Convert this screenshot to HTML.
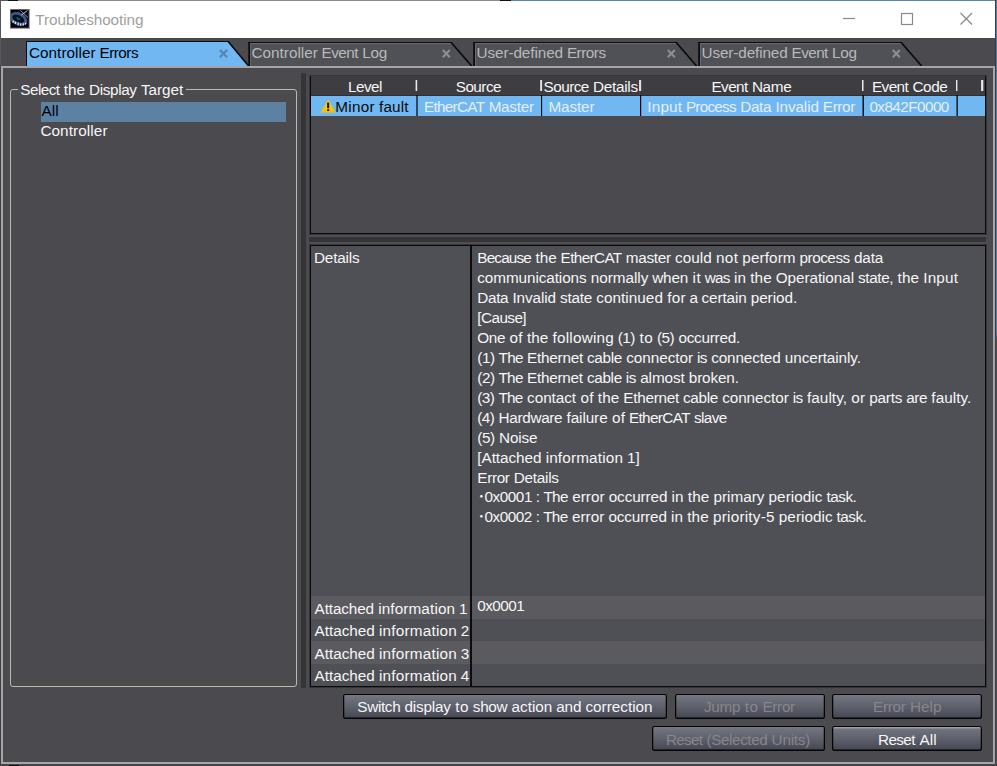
<!DOCTYPE html>
<html><head><meta charset="utf-8"><title>Troubleshooting</title>
<style>
html,body{margin:0;padding:0;}
body{width:997px;height:766px;position:relative;overflow:hidden;background:#4a4a4f;font-family:"Liberation Sans","Noto Sans CJK JP",sans-serif;font-size:15.3px;color:#fff;}
.abs{position:absolute;}
.t{position:absolute;white-space:nowrap;line-height:20px;height:20px;}
.t span{position:absolute;top:0;white-space:pre;}
#title{left:1px;top:1px;width:994px;height:37px;background:#fff;}
#wintop{left:0;top:0;width:997px;height:1px;background:linear-gradient(90deg,#555 0,#555 8px,#111 8px,#111 18px,#8c8c8c 18px,#8c8c8c 500px,#111 500px,#111 511px,#5c84b0 511px);}
#winleft{left:0;top:0;width:1px;height:766px;background:linear-gradient(#585858 0,#585858 64px,#3e3e42 68px);}
#winright{left:995px;top:0;width:1px;height:766px;background:#3c3d42;}
#winright2{left:996px;top:0;width:1px;height:766px;background:linear-gradient(#567ca6 0,#567ca6 330px,#4c4c51 340px);}
#winbot{left:0;top:764px;width:997px;height:2px;background:#444448;}
#panel{left:1px;top:66px;width:990px;height:694px;border:2px solid #a6a6a6;}
.btn{position:absolute;height:23px;border:1px solid #050505;border-radius:2px;background:linear-gradient(#747681,#5e606b 50%,#454852);box-shadow:inset 0 -1px 0 rgba(0,0,0,0.5),inset 1px 0 0 rgba(0,0,0,0.25),inset -1px 0 0 rgba(0,0,0,0.25);}
.btn.hl{box-shadow:inset 0 -1px 0 rgba(0,0,0,0.5),inset 1px 0 0 rgba(0,0,0,0.25),inset -1px 0 0 rgba(0,0,0,0.25),inset 0 1.5px 0 rgba(255,255,255,0.3);}
#gb{left:10px;top:89px;width:285px;height:596px;border:1px solid #b9b9ac;border-radius:3px;}
#gbgap{left:18px;top:88px;width:168px;height:3px;background:#4a4a4f;}
#selAll{left:41px;top:102px;width:245px;height:20px;background:#5d81a3;}
#vsplit{left:301px;top:73px;width:5px;height:615px;background:#353538;}
#hsplit{left:309px;top:237px;width:677px;height:5px;background:#353538;border-top:2px solid #4e4e53;border-bottom:2px solid #4e4e53;margin-top:-2px;}
#tbl{left:310px;top:76px;width:674px;height:156px;border:1px solid #0a0a0a;box-shadow:0 0 0 1px #363639;background:#4a4a4f;}
#thead{left:311px;top:76px;width:674px;height:20px;background:#3d3d42;border-bottom:1px solid #303034;box-sizing:border-box;}
#trow{left:311px;top:96px;width:674px;height:20px;background:#71b8f2;}
.hsep{position:absolute;top:80px;height:11px;}
.rsep{position:absolute;top:95px;height:21px;}
#det{left:310px;top:245px;width:674px;height:440px;border:1px solid #0a0a0a;box-shadow:0 0 0 1px #363639;background:#4f5055;}
#detdiv{left:470px;top:246px;width:2px;height:440px;background:#0c0c0c;}
.ai{position:absolute;left:311px;width:674px;}
</style></head><body>
<div class="abs" id="title"></div>
<div class="abs" id="wintop"></div>
<div class="abs" id="winleft"></div>
<div class="abs" id="winright"></div><div class="abs" id="winright2"></div>
<div class="abs" id="winbot"></div>
<svg class="abs" style="left:0;top:0" width="997" height="70" viewBox="0 0 997 70">
 <!-- window buttons -->
 <g stroke="#8a8a8a" stroke-width="1.2" fill="none">
  <line x1="843" y1="18.5" x2="855" y2="18.5"/>
  <rect x="901.5" y="13.5" width="11" height="11"/>
  <line x1="960.5" y1="13" x2="972" y2="24.5"/><line x1="972" y1="13" x2="960.5" y2="24.5"/>
 </g>
 <!-- tabs -->
 <path d="M26.5 66 V41.5 H228.3 L248.9 66 Z" fill="#71b8f2"/><path d="M26.5 66 V41.5 H228.3" fill="none" stroke="#0a0a0a" stroke-width="1"/><path d="M228.0 41.3 L248.6 66" fill="none" stroke="#0a0a0a" stroke-width="1.7"/>
 <path d="M249.5 66 V42.5 H451.3 L471.9 66 Z" fill="#505156"/><path d="M250.5 66 V44 M250.0 43.5 H451.9" fill="none" stroke="#6a6a6f" stroke-width="1"/><path d="M249.2 66 V42.0" fill="none" stroke="#0a0a0a" stroke-width="1.7"/><path d="M248.3 42.5 H451.3" fill="none" stroke="#0a0a0a" stroke-width="1"/><path d="M451.0 42.3 L471.6 66" fill="none" stroke="#0a0a0a" stroke-width="1.7"/>
 <path d="M474.5 66 V42.5 H676.3 L696.9 66 Z" fill="#505156"/><path d="M475.5 66 V44 M475.0 43.5 H676.9" fill="none" stroke="#6a6a6f" stroke-width="1"/><path d="M474.1 66 V42.0" fill="none" stroke="#0a0a0a" stroke-width="1.7"/><path d="M473.3 42.5 H676.3" fill="none" stroke="#0a0a0a" stroke-width="1"/><path d="M676.0 42.3 L696.6 66" fill="none" stroke="#0a0a0a" stroke-width="1.7"/>
 <path d="M699.5 66 V42.5 H901.3 L921.9 66 Z" fill="#505156"/><path d="M700.5 66 V44 M700.0 43.5 H901.9" fill="none" stroke="#6a6a6f" stroke-width="1"/><path d="M699.1 66 V42.0" fill="none" stroke="#0a0a0a" stroke-width="1.7"/><path d="M698.3 42.5 H901.3" fill="none" stroke="#0a0a0a" stroke-width="1"/><path d="M901.0 42.3 L921.6 66" fill="none" stroke="#0a0a0a" stroke-width="1.7"/>
 <g stroke-width="2.1" fill="none">
  <path d="M219.8 49.9 l7.4 7.4 m0 -7.4 l-7.4 7.4" stroke="#5587b4" stroke-width="2.3"/>
  <path d="M442.8 50 l7 7.2 m0 -7.2 l-7 7.2" stroke="#8e8e8e"/>
  <path d="M667.8 50 l7 7.2 m0 -7.2 l-7 7.2" stroke="#8e8e8e"/>
  <path d="M892.8 50 l7 7.2 m0 -7.2 l-7 7.2" stroke="#8e8e8e"/>
 </g>
 <!-- app icon -->
 <defs><filter id="bl" x="-20%" y="-20%" width="140%" height="140%"><feGaussianBlur stdDeviation="0.55"/></filter>
 <clipPath id="ic"><rect x="10.5" y="9.5" width="18.5" height="18.5"/></clipPath></defs>
 <g>
  <rect x="10" y="9" width="20" height="20" fill="#a4a4a8"/>
  <rect x="10.6" y="9.6" width="18.2" height="18.2" fill="#020407"/>
  <g clip-path="url(#ic)" filter="url(#bl)">
   <ellipse cx="18.3" cy="18.8" rx="7.8" ry="4.8" fill="none" stroke="#4a64a8" stroke-width="3" stroke-opacity="0.85" transform="rotate(24 18.3 18.8)"/>
   <ellipse cx="17.8" cy="18" rx="5.2" ry="2.9" fill="#03181d" transform="rotate(24 17.8 18)"/>
   <ellipse cx="18.2" cy="18.6" rx="2.2" ry="1.2" fill="#0d5560" transform="rotate(24 18.2 18.6)"/>
   <path d="M20.5 10.5 L28 17.5" stroke="#8f949c" stroke-width="1"/>
   <path d="M27.5 10.5 L21.5 15" stroke="#c9ced6" stroke-width="1"/>
   <path d="M12.5 22.5 l1.6 -1.6 M15 24 l0.8 -2.2 M18 25.5 l0.3 -3 M20.6 25.8 l0.3 -2.6 M23 25.5 l0.6 -2.2 M25.3 24.6 l0.8 -1.8" stroke="#e6eefc" stroke-width="1.2"/>
   <path d="M12 14 C14 12.5 17 12 20 12.6" stroke="#3b4b70" stroke-width="0.9" fill="none"/>
  </g>
 </g>
</svg>
<div class="abs" id="panel"></div>
<div class="abs" style="left:9px;top:765px;width:10px;height:1px;background:#111"></div>
<div class="abs" id="gb"></div>
<div class="abs" id="gbgap"></div>
<div class="abs" id="selAll"></div>
<div class="abs" id="vsplit"></div>
<div class="abs" id="tbl"></div>
<div class="abs" id="thead"></div>
<div class="abs" id="trow"></div>
<div class="hsep" style="left:415px;width:3px;background:linear-gradient(90deg,rgba(232,232,232,0.40) 0px,rgba(232,232,232,0.40) 1px,rgba(232,232,232,1.00) 1px,rgba(232,232,232,1.00) 2px,rgba(232,232,232,0.20) 2px,rgba(232,232,232,0.20) 3px)"></div><div class="hsep" style="left:540px;width:3px;background:linear-gradient(90deg,rgba(232,232,232,0.85) 0px,rgba(232,232,232,0.85) 1px,rgba(232,232,232,0.95) 1px,rgba(232,232,232,0.95) 2px,rgba(232,232,232,0.10) 2px,rgba(232,232,232,0.10) 3px)"></div><div class="hsep" style="left:639px;width:3px;background:linear-gradient(90deg,rgba(232,232,232,0.90) 0px,rgba(232,232,232,0.90) 1px,rgba(232,232,232,0.95) 1px,rgba(232,232,232,0.95) 2px,rgba(232,232,232,0.15) 2px,rgba(232,232,232,0.15) 3px)"></div><div class="hsep" style="left:862px;width:2px;background:linear-gradient(90deg,rgba(232,232,232,1.00) 0px,rgba(232,232,232,1.00) 1px,rgba(232,232,232,0.50) 1px,rgba(232,232,232,0.50) 2px)"></div><div class="hsep" style="left:956px;width:2px;background:linear-gradient(90deg,rgba(232,232,232,1.00) 0px,rgba(232,232,232,1.00) 1px,rgba(232,232,232,0.40) 1px,rgba(232,232,232,0.40) 2px)"></div><div class="hsep" style="left:981px;width:3px;background:linear-gradient(90deg,rgba(232,232,232,0.90) 0px,rgba(232,232,232,0.90) 1px,rgba(232,232,232,1.00) 1px,rgba(232,232,232,1.00) 2px,rgba(232,232,232,0.30) 2px,rgba(232,232,232,0.30) 3px)"></div>
<div class="rsep" style="left:416px;width:2px;background:linear-gradient(90deg,rgba(4,6,10,0.62) 0px,rgba(4,6,10,0.62) 1px,rgba(4,6,10,0.62) 1px,rgba(4,6,10,0.62) 2px)"></div><div class="rsep" style="left:541px;width:2px;background:linear-gradient(90deg,rgba(4,6,10,1.00) 0px,rgba(4,6,10,1.00) 1px,rgba(4,6,10,0.15) 1px,rgba(4,6,10,0.15) 2px)"></div><div class="rsep" style="left:640px;width:2px;background:linear-gradient(90deg,rgba(4,6,10,1.00) 0px,rgba(4,6,10,1.00) 1px,rgba(4,6,10,0.20) 1px,rgba(4,6,10,0.20) 2px)"></div><div class="rsep" style="left:862px;width:2px;background:linear-gradient(90deg,rgba(4,6,10,0.50) 0px,rgba(4,6,10,0.50) 1px,rgba(4,6,10,0.90) 1px,rgba(4,6,10,0.90) 2px)"></div><div class="rsep" style="left:956px;width:2px;background:linear-gradient(90deg,rgba(4,6,10,0.50) 0px,rgba(4,6,10,0.50) 1px,rgba(4,6,10,0.80) 1px,rgba(4,6,10,0.80) 2px)"></div>
<svg class="abs" style="left:320px;top:99px" width="16" height="15" viewBox="0 0 16 15"><defs><linearGradient id="wg" x1="0" y1="0" x2="0" y2="1"><stop offset="0" stop-color="#ffe100"/><stop offset="1" stop-color="#f6bd00"/></linearGradient></defs><path d="M8.3 1.1 L15 13.2 H1.1 Z" fill="url(#wg)" stroke="#f3c400" stroke-width="0.7" stroke-linejoin="round"/><rect x="7.1" y="3.4" width="2.1" height="5.8" rx="0.5" fill="#1a1030"/><rect x="7.1" y="10.2" width="2.1" height="1.9" rx="0.4" fill="#1a1030"/></svg>
<div class="abs" id="hsplit"></div>
<div class="abs" id="det"></div>
<div class="ai" style="top:596px;height:23px;background:#5a5a5f"></div>
<div class="ai" style="top:641px;height:23px;background:#5a5a5f"></div>
<div class="abs" id="detdiv"></div>
<div class="btn" style="left:343px;top:694px;width:322px"></div>
<div class="btn" style="left:675px;top:694px;width:148px"></div>
<div class="btn" style="left:832px;top:694px;width:148px"></div>
<div class="btn" style="left:652px;top:726px;width:171px"></div>
<div class="btn hl" style="left:832px;top:726px;width:148px"></div>
<div class="t" style="left:35.33px;top:10.40px;color:#a0a0a0"><span style="left:-0.03px;letter-spacing:-0.069px">Troubleshooting</span></div>
<div class="t" style="left:28.99px;top:43.40px;color:#000208"><span style="left:0.01px;letter-spacing:0.023px">Controller</span> <span style="left:70.44px;letter-spacing:-0.491px">Errors</span></div>
<div class="t" style="left:251.50px;top:43.40px;color:#b9b9b9"><span style="left:-0.00px;letter-spacing:-0.006px">Controller</span> <span style="left:70.10px;letter-spacing:-0.558px">Event</span> <span style="left:110.71px;letter-spacing:-0.257px">Log</span></div>
<div class="t" style="left:476.54px;top:43.40px;color:#b9b9b9"><span style="left:-0.04px;letter-spacing:-0.090px">User-defined</span> <span style="left:90.39px;letter-spacing:-0.499px">Errors</span></div>
<div class="t" style="left:701.56px;top:43.40px;color:#b9b9b9"><span style="left:-0.06px;letter-spacing:-0.120px">User-defined</span> <span style="left:89.97px;letter-spacing:-0.567px">Event</span> <span style="left:130.54px;letter-spacing:-0.267px">Log</span></div>
<div class="t" style="left:20.58px;top:80.40px;color:#f6f6f6"><span style="left:-0.28px;letter-spacing:-0.563px">Select</span> <span style="left:43.24px;letter-spacing:0.021px">the</span> <span style="left:68.46px;letter-spacing:-0.366px">Display</span> <span style="left:120.31px;letter-spacing:-0.041px">Target</span></div>
<div class="t" style="left:41.33px;top:101.10px;color:#00040c"><span style="left:0.07px;letter-spacing:0.133px">All</span></div>
<div class="t" style="left:40.36px;top:121.10px;color:#f6f6f6"><span style="left:0.04px;letter-spacing:0.089px">Controller</span></div>
<div class="t" style="left:348.27px;top:77.40px;color:#f6f6f6"><span style="left:-0.27px;letter-spacing:-0.536px">Level</span></div>
<div class="t" style="left:455.96px;top:77.40px;color:#f6f6f6"><span style="left:-0.26px;letter-spacing:-0.528px">Source</span></div>
<div class="t" style="left:543.76px;top:77.40px;color:#f6f6f6"><span style="left:-0.26px;letter-spacing:-0.528px">Source</span> <span style="left:49.28px;letter-spacing:-0.283px">Details</span></div>
<div class="t" style="left:711.80px;top:77.40px;color:#f6f6f6"><span style="left:-0.30px;letter-spacing:-0.599px">Event</span> <span style="left:40.08px;letter-spacing:-0.311px">Name</span></div>
<div class="t" style="left:872.18px;top:77.40px;color:#f6f6f6"><span style="left:-0.28px;letter-spacing:-0.553px">Event</span> <span style="left:40.28px;letter-spacing:-0.417px">Code</span></div>
<div class="t" style="left:335.16px;top:97.40px;color:#0a0a0a"><span style="left:0.14px;letter-spacing:0.287px">Minor</span> <span style="left:43.87px;letter-spacing:0.135px">fault</span></div>
<div class="t" style="left:424.25px;top:97.40px;color:#e4eef8"><span style="left:-0.35px;letter-spacing:-0.697px">EtherCAT</span> <span style="left:64.39px;letter-spacing:-0.263px">Master</span></div>
<div class="t" style="left:548.57px;top:97.40px;color:#e4eef8"><span style="left:-0.07px;letter-spacing:-0.142px">Master</span></div>
<div class="t" style="left:647.21px;top:97.40px;color:#e4eef8"><span style="left:0.09px;letter-spacing:0.182px">Input</span> <span style="left:38.68px;letter-spacing:-0.750px">Process</span> <span style="left:93.02px;letter-spacing:-0.346px">Data</span> <span style="left:128.18px;letter-spacing:-0.108px">Invalid</span> <span style="left:175.62px;letter-spacing:-0.383px">Error</span></div>
<div class="t" style="left:869.68px;top:97.40px;color:#e4eef8"><span style="left:-0.28px;letter-spacing:-0.566px">0x842F0000</span></div>
<div class="t" style="left:314.10px;top:248.40px;color:#f6f6f6"><span style="left:-0.10px;letter-spacing:-0.195px">Details</span></div>
<div class="t" style="left:477.72px;top:248.40px;color:#f6f6f6"><span style="left:-0.42px;letter-spacing:-0.843px">Because</span> <span style="left:57.75px;letter-spacing:0.041px">the</span> <span style="left:82.90px;letter-spacing:-0.635px">EtherCAT</span> <span style="left:148.13px;letter-spacing:-0.292px">master</span> <span style="left:197.38px;letter-spacing:0.004px">could</span> <span style="left:238.25px;letter-spacing:0.353px">not</span> <span style="left:264.55px;letter-spacing:0.103px">perform</span> <span style="left:321.79px;letter-spacing:-0.473px">process</span> <span style="left:376.30px;letter-spacing:-0.166px">data</span></div>
<div class="t" style="left:477.35px;top:268.40px;color:#f6f6f6"><span style="left:-0.05px;letter-spacing:-0.092px">communications</span> <span style="left:113.34px;letter-spacing:-0.027px">normally</span> <span style="left:174.96px;letter-spacing:-0.221px">when</span> <span style="left:215.14px;letter-spacing:0.535px">it</span> <span style="left:227.32px;letter-spacing:-0.786px">was</span> <span style="left:256.74px;letter-spacing:0.115px">in</span> <span style="left:272.96px;letter-spacing:0.062px">the</span> <span style="left:298.45px;letter-spacing:-0.083px">Operational</span> <span style="left:380.62px;letter-spacing:-0.352px">state,</span> <span style="left:420.25px;letter-spacing:0.062px">the</span> <span style="left:445.87px;letter-spacing:0.177px">Input</span></div>
<div class="t" style="left:477.47px;top:288.40px;color:#f6f6f6"><span style="left:-0.17px;letter-spacing:-0.348px">Data</span> <span style="left:34.98px;letter-spacing:-0.109px">Invalid</span> <span style="left:82.50px;letter-spacing:-0.220px">state</span> <span style="left:118.81px;letter-spacing:0.038px">continued</span> <span style="left:189.75px;letter-spacing:0.291px">for</span> <span style="left:212.01px;letter-spacing:-0.870px">a</span> <span style="left:224.14px;letter-spacing:-0.144px">certain</span> <span style="left:273.22px;letter-spacing:-0.046px">period.</span></div>
<div class="t" style="left:477.59px;top:308.40px;color:#f6f6f6"><span style="left:-0.29px;letter-spacing:-0.574px">[Cause]</span></div>
<div class="t" style="left:477.51px;top:328.40px;color:#f6f6f6"><span style="left:-0.21px;letter-spacing:-0.412px">One</span> <span style="left:31.98px;letter-spacing:0.368px">of</span> <span style="left:49.45px;letter-spacing:0.062px">the</span> <span style="left:75.09px;letter-spacing:0.205px">following</span> <span style="left:140.22px;letter-spacing:-0.514px">(1)</span> <span style="left:162.03px;letter-spacing:0.562px">to</span> <span style="left:179.50px;letter-spacing:-0.514px">(5)</span> <span style="left:200.91px;letter-spacing:-0.244px">occurred.</span></div>
<div class="t" style="left:477.55px;top:348.40px;color:#f6f6f6"><span style="left:-0.25px;letter-spacing:-0.505px">(1)</span> <span style="left:20.96px;letter-spacing:-0.697px">The</span> <span style="left:49.57px;letter-spacing:-0.252px">Ethernet</span> <span style="left:109.47px;letter-spacing:-0.323px">cable</span> <span style="left:148.69px;letter-spacing:-0.048px">connector</span> <span style="left:219.33px;letter-spacing:-0.518px">is</span> <span style="left:233.67px;letter-spacing:-0.130px">connected</span> <span style="left:307.24px;letter-spacing:-0.081px">uncertainly.</span></div>
<div class="t" style="left:477.56px;top:368.40px;color:#f6f6f6"><span style="left:-0.26px;letter-spacing:-0.511px">(2)</span> <span style="left:20.94px;letter-spacing:-0.705px">The</span> <span style="left:49.52px;letter-spacing:-0.259px">Ethernet</span> <span style="left:109.36px;letter-spacing:-0.330px">cable</span> <span style="left:148.31px;letter-spacing:-0.523px">is</span> <span style="left:162.66px;letter-spacing:-0.091px">almost</span> <span style="left:211.26px;letter-spacing:-0.152px">broken.</span></div>
<div class="t" style="left:477.56px;top:388.40px;color:#f6f6f6"><span style="left:-0.26px;letter-spacing:-0.518px">(3)</span> <span style="left:20.90px;letter-spacing:-0.715px">The</span> <span style="left:49.56px;letter-spacing:-0.052px">contact</span> <span style="left:102.85px;letter-spacing:0.364px">of</span> <span style="left:120.30px;letter-spacing:0.057px">the</span> <span style="left:145.69px;letter-spacing:-0.268px">Ethernet</span> <span style="left:205.45px;letter-spacing:-0.338px">cable</span> <span style="left:244.59px;letter-spacing:-0.064px">connector</span> <span style="left:315.08px;letter-spacing:-0.529px">is</span> <span style="left:329.48px;letter-spacing:0.047px">faulty,</span> <span style="left:373.69px;letter-spacing:0.202px">or</span> <span style="left:391.62px;letter-spacing:-0.176px">parts</span> <span style="left:428.73px;letter-spacing:-0.466px">are</span> <span style="left:453.81px;letter-spacing:0.047px">faulty.</span></div>
<div class="t" style="left:477.57px;top:408.40px;color:#f6f6f6"><span style="left:-0.27px;letter-spacing:-0.534px">(4)</span> <span style="left:21.04px;letter-spacing:-0.328px">Hardware</span> <span style="left:88.95px;letter-spacing:-0.088px">failure</span> <span style="left:134.32px;letter-spacing:0.344px">of</span> <span style="left:151.38px;letter-spacing:-0.640px">EtherCAT</span> <span style="left:216.40px;letter-spacing:-0.626px">slave</span></div>
<div class="t" style="left:477.52px;top:428.40px;color:#f6f6f6"><span style="left:-0.22px;letter-spacing:-0.435px">(5)</span> <span style="left:21.50px;letter-spacing:-0.136px">Noise</span></div>
<div class="t" style="left:477.33px;top:448.40px;color:#f6f6f6"><span style="left:-0.03px;letter-spacing:-0.057px">[Attached</span> <span style="left:68.32px;letter-spacing:0.159px">information</span> <span style="left:149.74px;letter-spacing:-0.072px">1]</span></div>
<div class="t" style="left:477.48px;top:468.40px;color:#f6f6f6"><span style="left:-0.18px;letter-spacing:-0.352px">Error</span> <span style="left:36.25px;letter-spacing:-0.249px">Details</span></div>
<div class="t" style="left:484.62px;top:486.90px;color:#f6f6f6"><span style="left:-7.02px">･</span><span style="left:-0.22px;letter-spacing:-0.435px">0x0001</span> <span style="left:51.22px;letter-spacing:-0.980px">:</span> <span style="left:58.78px;letter-spacing:-0.675px">The</span> <span style="left:87.60px;letter-spacing:0.034px">error</span> <span style="left:124.12px;letter-spacing:-0.119px">occurred</span> <span style="left:186.94px;letter-spacing:0.142px">in</span> <span style="left:203.24px;letter-spacing:0.092px">the</span> <span style="left:228.86px;letter-spacing:-0.010px">primary</span> <span style="left:283.95px;letter-spacing:0.051px">periodic</span> <span style="left:341.81px;letter-spacing:-0.472px">task.</span></div>
<div class="t" style="left:484.63px;top:506.90px;color:#f6f6f6"><span style="left:-7.03px">･</span><span style="left:-0.23px;letter-spacing:-0.457px">0x0002</span> <span style="left:51.07px;letter-spacing:-0.989px">:</span> <span style="left:58.60px;letter-spacing:-0.698px">The</span> <span style="left:87.34px;letter-spacing:0.015px">error</span> <span style="left:123.75px;letter-spacing:-0.140px">occurred</span> <span style="left:186.40px;letter-spacing:0.124px">in</span> <span style="left:202.65px;letter-spacing:0.072px">the</span> <span style="left:228.33px;letter-spacing:0.235px">priority-5</span> <span style="left:294.19px;letter-spacing:0.032px">periodic</span> <span style="left:351.89px;letter-spacing:-0.489px">task.</span></div>
<div class="t" style="left:477.47px;top:596.10px;color:#f6f6f6"><span style="left:-0.27px;letter-spacing:-0.548px">0x0001</span></div>
<div class="t" style="left:314.67px;top:599.20px;color:#f6f6f6"><span style="left:-0.07px;letter-spacing:-0.135px">Attached</span> <span style="left:63.47px;letter-spacing:0.125px">information</span> <span style="left:144.32px;letter-spacing:-0.463px">1</span></div>
<div class="t" style="left:314.62px;top:621.40px;color:#f6f6f6"><span style="left:-0.02px;letter-spacing:-0.038px">Attached</span> <span style="left:64.34px;letter-spacing:0.217px">information</span> <span style="left:146.26px;letter-spacing:-0.358px">2</span></div>
<div class="t" style="left:314.62px;top:643.60px;color:#f6f6f6"><span style="left:-0.02px;letter-spacing:-0.038px">Attached</span> <span style="left:64.34px;letter-spacing:0.217px">information</span> <span style="left:146.26px;letter-spacing:-0.358px">3</span></div>
<div class="t" style="left:314.62px;top:665.80px;color:#f6f6f6"><span style="left:-0.02px;letter-spacing:-0.038px">Attached</span> <span style="left:64.34px;letter-spacing:0.217px">information</span> <span style="left:146.26px;letter-spacing:-0.358px">4</span></div>
<div class="t" style="left:357.47px;top:697.10px;color:#f6f6f6"><span style="left:-0.17px;letter-spacing:-0.342px">Switch</span> <span style="left:47.03px;letter-spacing:-0.202px">display</span> <span style="left:97.75px;letter-spacing:0.569px">to</span> <span style="left:115.34px;letter-spacing:-0.295px">show</span> <span style="left:154.13px;letter-spacing:-0.030px">action</span> <span style="left:198.82px;letter-spacing:-0.178px">and</span> <span style="left:228.02px;letter-spacing:-0.010px">correction</span></div>
<div class="t" style="left:704.17px;top:697.10px;color:#86868b"><span style="left:-0.17px;letter-spacing:-0.337px">Jump</span> <span style="left:40.55px;letter-spacing:0.647px">to</span> <span style="left:58.29px;letter-spacing:-0.309px">Error</span></div>
<div class="t" style="left:873.13px;top:697.10px;color:#86868b"><span style="left:-0.13px;letter-spacing:-0.270px">Error</span> <span style="left:36.85px;letter-spacing:0.023px">Help</span></div>
<div class="t" style="left:666.37px;top:729.60px;color:#86868b"><span style="left:-0.37px;letter-spacing:-0.734px">Reset</span> <span style="left:40.21px;letter-spacing:-0.428px">(Selected</span> <span style="left:105.21px;letter-spacing:-0.230px">Units)</span></div>
<div class="t" style="left:878.31px;top:729.60px;color:#f6f6f6"><span style="left:-0.31px;letter-spacing:-0.613px">Reset</span> <span style="left:41.15px;letter-spacing:0.100px">All</span></div>
</body></html>
